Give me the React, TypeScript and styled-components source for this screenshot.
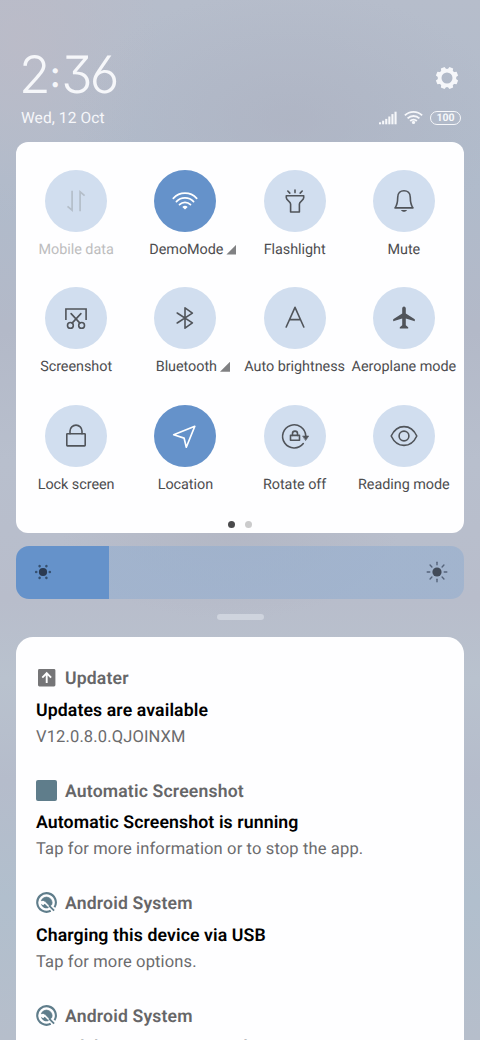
import React from "react";
import styled, { createGlobalStyle, css } from "styled-components";

const Global = createGlobalStyle`
  * { box-sizing: border-box; }
  html, body { margin: 0; padding: 0; overflow: hidden; }
  body {
    font-family: Roboto, "Liberation Sans", sans-serif;
    text-rendering: geometricPrecision;
  }
`;

const Screen = styled.div`
  width: 480px;
  height: 1040px;
  overflow: hidden;
  display: flex;
  flex-direction: column;
  padding: 0 16px;
  background:
    radial-gradient(ellipse 220px 130px at 290px 120px, rgba(173, 176, 191, 0.55), rgba(173, 176, 191, 0)),
    radial-gradient(ellipse 140px 180px at 20px 40px, rgba(188, 187, 199, 0.8), rgba(188, 187, 199, 0)),
    radial-gradient(ellipse 170px 90px at 230px 530px, rgba(176, 179, 192, 0.6), rgba(176, 179, 192, 0)),
    linear-gradient(180deg, #b6bdcb 0px, #b0bbcb 180px, #b3b9c8 330px, #b8bfcd 460px, #b8bdcb 600px, #b9c2ce 680px, #b5bccb 780px, #b1bfcd 900px, #b6becb 1040px);
`;

const Header = styled.header`
  height: 142px;
  flex: none;
  display: flex;
  justify-content: space-between;
  padding: 46px 3px 0 5px;
  color: #f6f7fa;
`;

const HeaderSide = styled.div<{ $end?: boolean }>`
  display: flex;
  flex-direction: column;
  align-items: ${(p) => (p.$end ? "flex-end" : "flex-start")};
`;

const Clock = styled.div`
  height: 58px;
  display: flex;
  align-items: center;
  font-family: Inter, Lato, sans-serif;
  font-weight: 280;
  font-size: 51.5px;
  line-height: 58px;
  letter-spacing: -2.8px;
  margin-left: -2px;
  font-feature-settings: "cv09" 1, "cv03" 1;
`;

const Colon = styled.span`
  width: 12px;
  margin: 0 0 3px 1.5px;
  display: flex;
  justify-content: center;
  font-size: 36px;
  font-weight: 500;
  letter-spacing: 0;
`;

const DateText = styled.div`
  margin-top: 4px;
  font-size: 15.5px;
  line-height: 20px;
  letter-spacing: 0.1px;
  white-space: nowrap;
`;

const GearBox = styled.div`
  height: 58px;
  padding: 20px 2px 0 0;
`;

const StatusRow = styled.div`
  display: flex;
  align-items: center;
  gap: 7px;
  height: 15px;
  margin-top: 6px;
`;

const Battery = styled.div`
  width: 31px;
  height: 14px;
  border: 1.5px solid #f6f7fa;
  border-radius: 7px;
  font-size: 10.5px;
  line-height: 11.5px;
  font-weight: 700;
  text-align: center;
`;

const Panel = styled.section`
  flex: none;
  height: 391px;
  border-radius: 12px;
  background: #fefeff;
  padding: 28px 5.5px 0;
`;

const Tiles = styled.div`
  display: grid;
  grid-template-columns: repeat(4, 109.25px);
  grid-auto-rows: 117.3px;
`;

const Tile = styled.div`
  display: flex;
  flex-direction: column;
  align-items: center;
`;

const Disc = styled.div<{ $on?: boolean }>`
  width: 62px;
  height: 62px;
  border-radius: 50%;
  background: ${(p) => (p.$on ? "#6592ca" : "#d1deef")};
  color: ${(p) => (p.$on ? "#ffffff" : "#50545a")};
  svg { display: block; }
`;

const Label = styled.div<{ $off?: boolean; $more?: boolean }>`
  position: relative;
  margin-top: 8px;
  padding-left: ${(p) => (p.$more ? "2px" : "0")};
  font-size: 14.4px;
  line-height: 20px;
  letter-spacing: -0.04px;
  white-space: nowrap;
  color: ${(p) => (p.$off ? "#bdbdbe" : "#4d4d4f")};
`;

const Corner = styled.span`
  position: absolute;
  left: calc(100% + 3px);
  bottom: 5.5px;
  width: 10px;
  height: 10px;
  background: #808183;
  clip-path: polygon(100% 0, 100% 100%, 0 100%);
`;

const Pager = styled.div`
  display: flex;
  justify-content: center;
  gap: 10.5px;
  margin-top: -1.4px;
`;

const Dot = styled.span<{ $active?: boolean }>`
  width: 7px;
  height: 7px;
  border-radius: 50%;
  background: ${(p) => (p.$active ? "#4a4a4c" : "#cbcbcc")};
`;

const Slider = styled.div`
  flex: none;
  margin-top: 12.5px;
  height: 53.5px;
  border-radius: 13px;
  overflow: hidden;
  display: flex;
  justify-content: space-between;
  align-items: center;
  padding: 0 15px 0 15px;
  background: linear-gradient(90deg, #6592ca 93.3px, rgba(150, 175, 207, 0.65) 93.3px);
`;

const Handle = styled.div`
  flex: none;
  align-self: center;
  margin-top: 15px;
  width: 47px;
  height: 6px;
  border-radius: 3px;
  background: #cfd4de;
`;

const Shade = styled.section`
  flex: none;
  margin-top: 17px;
  height: 420px;
  border-radius: 17px 17px 0 0;
  background: #fefeff;
  padding: 29px 20px 0;
`;

const Notice = styled.article`
  height: 112.5px;
`;

const AppRow = styled.div`
  display: flex;
  align-items: center;
  gap: 8px;
  height: 24px;
`;

const AppName = styled.span`
  padding-top: 2px;
  font-size: 17.6px;
  font-weight: 600;
  letter-spacing: 0.17px;
  color: #666668;
  white-space: nowrap;
`;

const line = css`
  white-space: nowrap;
  line-height: 26px;
`;

const Title = styled.div`
  ${line}
  margin-top: 7.6px;
  font-size: 17.7px;
  font-weight: 600;
  letter-spacing: 0.1px;
  color: #000;
`;

const Body = styled.div`
  ${line}
  margin-top: 1.4px;
  font-size: 16.5px;
  letter-spacing: 0.14px;
  color: #6b6b6d;
`;

const Glyph = ({ children, w = 1.6 }: { children: React.ReactNode; w?: number }) => (
  <svg width="62" height="62" viewBox="-31 -31 62 62" fill="none" stroke="currentColor" strokeWidth={w} strokeLinecap="round" strokeLinejoin="round">
    {children}
  </svg>
);

const icons: Record<string, React.ReactNode> = {
  data: (
    <Glyph w={1.7}>
      <g stroke="#b4bec9" strokeLinecap="butt" strokeLinejoin="miter">
        <path d="M-3.9-10.3V9.2L-8.5 5.4M4.1 10.3V-9.2L8.6-5.3" />
      </g>
    </Glyph>
  ),
  wifi: (
    <Glyph w={1.7}>
      <path d="M-11.7-2.6A15.8 15.8 0 0 1 11.7-2.6M-8.6.7A11.7 11.7 0 0 1 8.6.7M-5.5 3.7A7.6 7.6 0 0 1 5.5 3.7" />
      <path d="M0 8.6-2.7 6A3.8 3.8 0 0 1 2.7 6Z" fill="currentColor" stroke="none" />
    </Glyph>
  ),
  torch: (
    <Glyph>
      <path d="M-8.7-5.2H8.7V-3.2C8.7-.6 4.4.2 4.4 3V11H-4.4V3C-4.4.2-8.7-.6-8.7-3.2ZM0-11V-8.4M-7.2-10-5.2-7.9M7.2-10 5.2-7.9" />
    </Glyph>
  ),
  bell: (
    <Glyph>
      <path d="M-9 6.9C-7.1 4.2-6.3 2-6.3-3.6C-6.3-8-3.5-10.3 0-10.3S6.3-8 6.3-3.6C6.3 2 7.1 4.2 9 6.9Z" />
      <path d="M-3 9H3C2.2 11.4-2.2 11.4-3 9Z" fill="currentColor" stroke="none" />
    </Glyph>
  ),
  shot: (
    <Glyph>
      <path d="M-10.1 2V-9H10.1V2" strokeLinecap="butt" strokeLinejoin="miter" />
      <path d="M-4.9-4.4 3.9 5.1M4.9-4.4-3.9 5.1" />
      <circle cx="-5.6" cy="7.4" r="2.9" />
      <circle cx="5.6" cy="7.4" r="2.9" />
    </Glyph>
  ),
  bt: (
    <Glyph>
      <path d="M-7.8-5 7.4 4.9 0 10.2V-10.2L7.4-4.9-7.8 5" />
    </Glyph>
  ),
  auto: (
    <Glyph>
      <path d="M-8.8 9 0-10.7 8.8 9M-5.4 1.6H5.4" />
    </Glyph>
  ),
  plane: (
    <Glyph>
      <path
        d="M0-11.6C1.1-11.6 1.8-10.6 1.8-9.4V-4.4L10.8 1.2V3.2L1.8.4V7.2L4.2 9.2V10.6H-4.2V9.2L-1.8 7.2V.4L-10.8 3.2V1.2L-1.8-4.4V-9.4C-1.8-10.6-1.1-11.6 0-11.6Z"
        fill="currentColor"
        stroke="none"
      />
    </Glyph>
  ),
  lock: (
    <Glyph>
      <rect x="-9.2" y="-2.3" width="18.4" height="12.2" rx=".6" />
      <path d="M-6-2.3V-4.9A6 6 0 0 1 6-4.9V-2.3" />
    </Glyph>
  ),
  nav: (
    <Glyph w={1.7}>
      <path d="M9.8-9.7 1.3 11.2-.9 2.1-11.3-1.2Z" />
    </Glyph>
  ),
  rotate: (
    <Glyph>
      <path d="M8.3 7.6A11.6 11.6 0 1 1 10.8 0" />
      <path d="M7.9 0H13.7L10.8 4.3Z" fill="currentColor" strokeWidth=".6" />
      <rect x="-4.5" y="-.6" width="9" height="4.9" />
      <path d="M-2.5-.6V-2.4A2.5 2.5 0 0 1 2.5-2.4V-.6" />
    </Glyph>
  ),
  eye: (
    <Glyph>
      <path d="M-12.8 0C-10-6-5.2-9.4 0-9.4S10-6 12.8 0C10 6 5.2 9.4 0 9.4S-10 6-12.8 0Z" />
      <circle r="4.9" />
    </Glyph>
  ),
};

const tiles: { icon: string; label: string; on?: boolean; off?: boolean; more?: boolean }[] = [
  { icon: "data", label: "Mobile data", off: true },
  { icon: "wifi", label: "DemoMode", on: true, more: true },
  { icon: "torch", label: "Flashlight" },
  { icon: "bell", label: "Mute" },
  { icon: "shot", label: "Screenshot" },
  { icon: "bt", label: "Bluetooth", more: true },
  { icon: "auto", label: "Auto brightness" },
  { icon: "plane", label: "Aeroplane mode" },
  { icon: "lock", label: "Lock screen" },
  { icon: "nav", label: "Location", on: true },
  { icon: "rotate", label: "Rotate off" },
  { icon: "eye", label: "Reading mode" },
];

const Gear = () => (
  <svg width="24" height="24" viewBox="-12 -12 24 24" fill="none" stroke="currentColor" display="block">
    <circle r="7.4" strokeWidth="3.8" />
    {[22.5, 67.5, 112.5, 157.5, 202.5, 247.5, 292.5, 337.5].map((a) => (
      <path key={a} d="M-2-11.2H2L2.8-8H-2.8Z" transform={`rotate(${a})`} fill="currentColor" stroke="none" />
    ))}
  </svg>
);

const Signal = () => (
  <svg width="18" height="14" viewBox="0 0 18 14" fill="currentColor">
    {[2, 3.6, 5.4, 7.8, 10.2, 12.6].map((h, i) => (
      <rect key={i} x={i * 3.1} y={13.3 - h} width="2.1" height={h} />
    ))}
  </svg>
);

const StatusWifi = () => (
  <svg width="19" height="15" viewBox="-9.5 0 19 15" fill="none" stroke="currentColor" strokeWidth="1.9">
    <path d="M-8.6 5.4A12.2 12.2 0 0 1 8.6 5.4M-5.9 8.4A8.4 8.4 0 0 1 5.9 8.4M-3.3 11A4.7 4.7 0 0 1 3.3 11" />
    <circle cy="12.4" r="1.6" fill="currentColor" stroke="none" />
  </svg>
);

const DimSun = () => (
  <svg width="24" height="24" viewBox="-12 -12 24 24">
    <circle r="4.1" fill="#2b3a51" />
    {[30, 90, 150, 210, 270, 330].map((a) => (
      <circle key={a} cy="-6.8" r="1.3" fill="#36506f" transform={`rotate(${a})`} />
    ))}
  </svg>
);

const BrightSun = () => (
  <svg width="24" height="24" viewBox="-12 -12 24 24">
    <circle r="4.6" fill="#424b59" />
    {[0, 45, 90, 135, 180, 225, 270, 315].map((a) => (
      <path key={a} d="M0-7.2V-9.8" stroke="#55637a" strokeWidth="1.4" strokeLinecap="round" transform={`rotate(${a})`} />
    ))}
  </svg>
);

const UpdaterIcon = () => (
  <svg width="21" height="22" viewBox="0 0 21 22">
    <rect x="2" y="2" width="17.4" height="17.4" rx="1.4" fill="#757577" />
    <path d="M10.7 16V6.4M6.3 10.6 10.7 6.2 15.1 10.6" stroke="#fff" strokeWidth="1.9" fill="none" />
  </svg>
);

const SquareIcon = () => (
  <svg width="21" height="22" viewBox="0 0 21 22">
    <rect x="0" y="0" width="21" height="21" rx="2" fill="#5f7d8b" />
  </svg>
);

const SystemIcon = () => (
  <svg width="21" height="22" viewBox="-10.5 -10.5 21 22" fill="none" stroke="#5f7d8b">
    <path d="M4.2 8.3A9.3 9.3 0 1 1 8 4.8" strokeWidth="2.1" />
    <path d="M-5.2-1.8A5.5 5.5 0 0 1 5.2 2.2L3.2 3.6-1.4-1.2Q-3.2-2.6-5.2-1.8Z" fill="#5f7d8b" strokeWidth=".8" />
    <path d="M-5.6 1.2A5.8 5.8 0 0 0 2.4 5.3L-1.8 1.2-3.3 2.8Z" fill="#5f7d8b" stroke="none" />
    <path d="M2.6 3.2 7.6 8.2" strokeWidth="1.9" />
  </svg>
);

const notices = [
  { Icon: UpdaterIcon, app: "Updater", title: "Updates are available", body: "V12.0.8.0.QJOINXM" },
  { Icon: SquareIcon, app: "Automatic Screenshot", title: "Automatic Screenshot is running", body: "Tap for more information or to stop the app." },
  { Icon: SystemIcon, app: "Android System", title: "Charging this device via USB", body: "Tap for more options." },
  { Icon: SystemIcon, app: "Android System", title: "USB debugging connected", body: "" },
];

export default function App() {
  return (
    <>
      <Global />
      <Screen>
        <Header>
          <HeaderSide>
            <Clock>
              2<Colon>:</Colon>36
            </Clock>
            <DateText>Wed, 12 Oct</DateText>
          </HeaderSide>
          <HeaderSide $end>
            <GearBox>
              <Gear />
            </GearBox>
            <StatusRow>
              <Signal />
              <StatusWifi />
              <Battery>100</Battery>
            </StatusRow>
          </HeaderSide>
        </Header>
        <Panel>
          <Tiles>
            {tiles.map((t) => (
              <Tile key={t.label}>
                <Disc $on={t.on}>{icons[t.icon]}</Disc>
                <Label $off={t.off} $more={t.more}>
                  {t.label}
                  {t.more && <Corner />}
                </Label>
              </Tile>
            ))}
          </Tiles>
          <Pager>
            <Dot $active />
            <Dot />
          </Pager>
        </Panel>
        <Slider>
          <DimSun />
          <BrightSun />
        </Slider>
        <Handle />
        <Shade>
          {notices.map(({ Icon, app, title, body }, i) => (
            <Notice key={i}>
              <AppRow>
                <Icon />
                <AppName>{app}</AppName>
              </AppRow>
              <Title>{title}</Title>
              <Body>{body}</Body>
            </Notice>
          ))}
        </Shade>
      </Screen>
    </>
  );
}
